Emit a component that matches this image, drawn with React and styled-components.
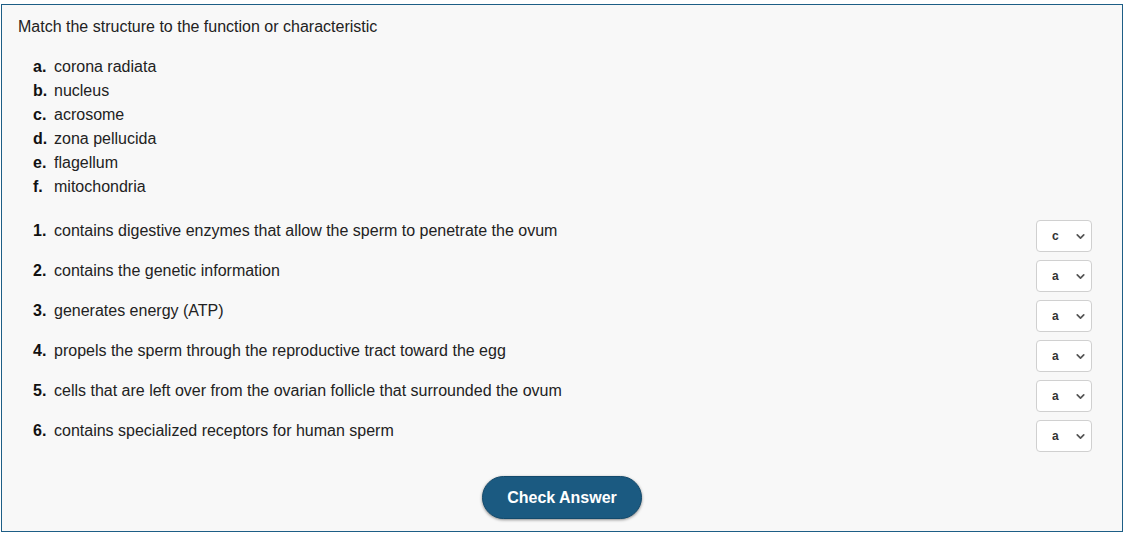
import React from 'react'
import styled, { createGlobalStyle } from 'styled-components'
import { ChevronDown } from 'lucide-react'

const GlobalStyle = createGlobalStyle`
  body {
    margin: 0;
    background: #ffffff;
    font-family: "Liberation Sans", Arial, sans-serif;
  }
`

const structures = [
  ['a', 'corona radiata'],
  ['b', 'nucleus'],
  ['c', 'acrosome'],
  ['d', 'zona pellucida'],
  ['e', 'flagellum'],
  ['f', 'mitochondria'],
]

const questions = [
  ['contains digestive enzymes that allow the sperm to penetrate the ovum', 'c'],
  ['contains the genetic information', 'a'],
  ['generates energy (ATP)', 'a'],
  ['propels the sperm through the reproductive tract toward the egg', 'a'],
  ['cells that are left over from the ovarian follicle that surrounded the ovum', 'a'],
  ['contains specialized receptors for human sperm', 'a'],
]

const App = () => {
  return (
    <>
      <GlobalStyle />
      <Panel>
        <Title>Match the structure to the function or characteristic</Title>
        <OptionList>
          {structures.map(([key, label]) => (
            <OptionItem key={key}>
              <Marker>{key}.</Marker>
              <span>{label}</span>
            </OptionItem>
          ))}
        </OptionList>
        <QuestionList>
          {questions.map(([text, answer], i) => (
            <QuestionRow key={i}>
              <QuestionText>
                <Marker>{i + 1}.</Marker>
                <span>{text}</span>
              </QuestionText>
              <SelectWrap>
                <Select defaultValue={answer}>
                  {structures.map(([key]) => (
                    <option key={key} value={key}>{key}</option>
                  ))}
                </Select>
                <Chevron size={13} strokeWidth={3.2} />
              </SelectWrap>
            </QuestionRow>
          ))}
        </QuestionList>
        <Footer>
          <CheckButton type='button'>Check Answer</CheckButton>
        </Footer>
      </Panel>
    </>
  )
}

const Panel = styled.div`
  margin: 4px 1px 3px 1px;
  border: 1px solid #1d5e86;
  background: #f8f8f8;
  padding: 13px 30px 12px 16px;
  color: #222;
  font-size: 16px;
`

const Title = styled.div`
  line-height: 18px;
`

const OptionList = styled.div`
  margin-top: 19px;
  padding-left: 15px;
  display: flex;
  flex-direction: column;
`

const OptionItem = styled.div`
  display: flex;
  line-height: 24px;
`

const Marker = styled.b`
  width: 21px;
  flex-shrink: 0;
  color: #111;
`

const QuestionList = styled.div`
  margin-top: 17px;
  padding-left: 15px;
  display: flex;
  flex-direction: column;
`

const QuestionRow = styled.div`
  display: flex;
  justify-content: space-between;
  align-items: flex-start;
  padding: 4px 0;
`

const QuestionText = styled.div`
  display: flex;
  line-height: 20px;
  padding-top: 1px;
`

const SelectWrap = styled.div`
  position: relative;
  width: 56px;
  height: 32px;
`

const Select = styled.select`
  appearance: none;
  width: 100%;
  height: 100%;
  box-sizing: border-box;
  border: 1px solid #d0d0d0;
  border-radius: 4px;
  background: #fff;
  padding: 0 0 0 15px;
  font-family: "Liberation Sans", Arial, sans-serif;
  font-size: 12px;
  font-weight: bold;
  color: #333;
  outline: none;
`

const Chevron = styled(ChevronDown)`
  position: absolute;
  right: 5px;
  top: 10px;
  color: #555;
  pointer-events: none;
`

const Footer = styled.div`
  display: flex;
  justify-content: center;
  margin-top: 20px;
  padding-left: 14px;
`

const CheckButton = styled.button`
  height: 43px;
  padding: 0 24px;
  border-radius: 22px;
  border: 1px solid #134a6c;
  background: #1b5a81;
  color: #fff;
  font-family: "Liberation Sans", Arial, sans-serif;
  font-size: 16px;
  font-weight: bold;
  box-shadow: 0 1px 3px rgba(0, 0, 0, 0.45);
  cursor: pointer;
`

export default App
